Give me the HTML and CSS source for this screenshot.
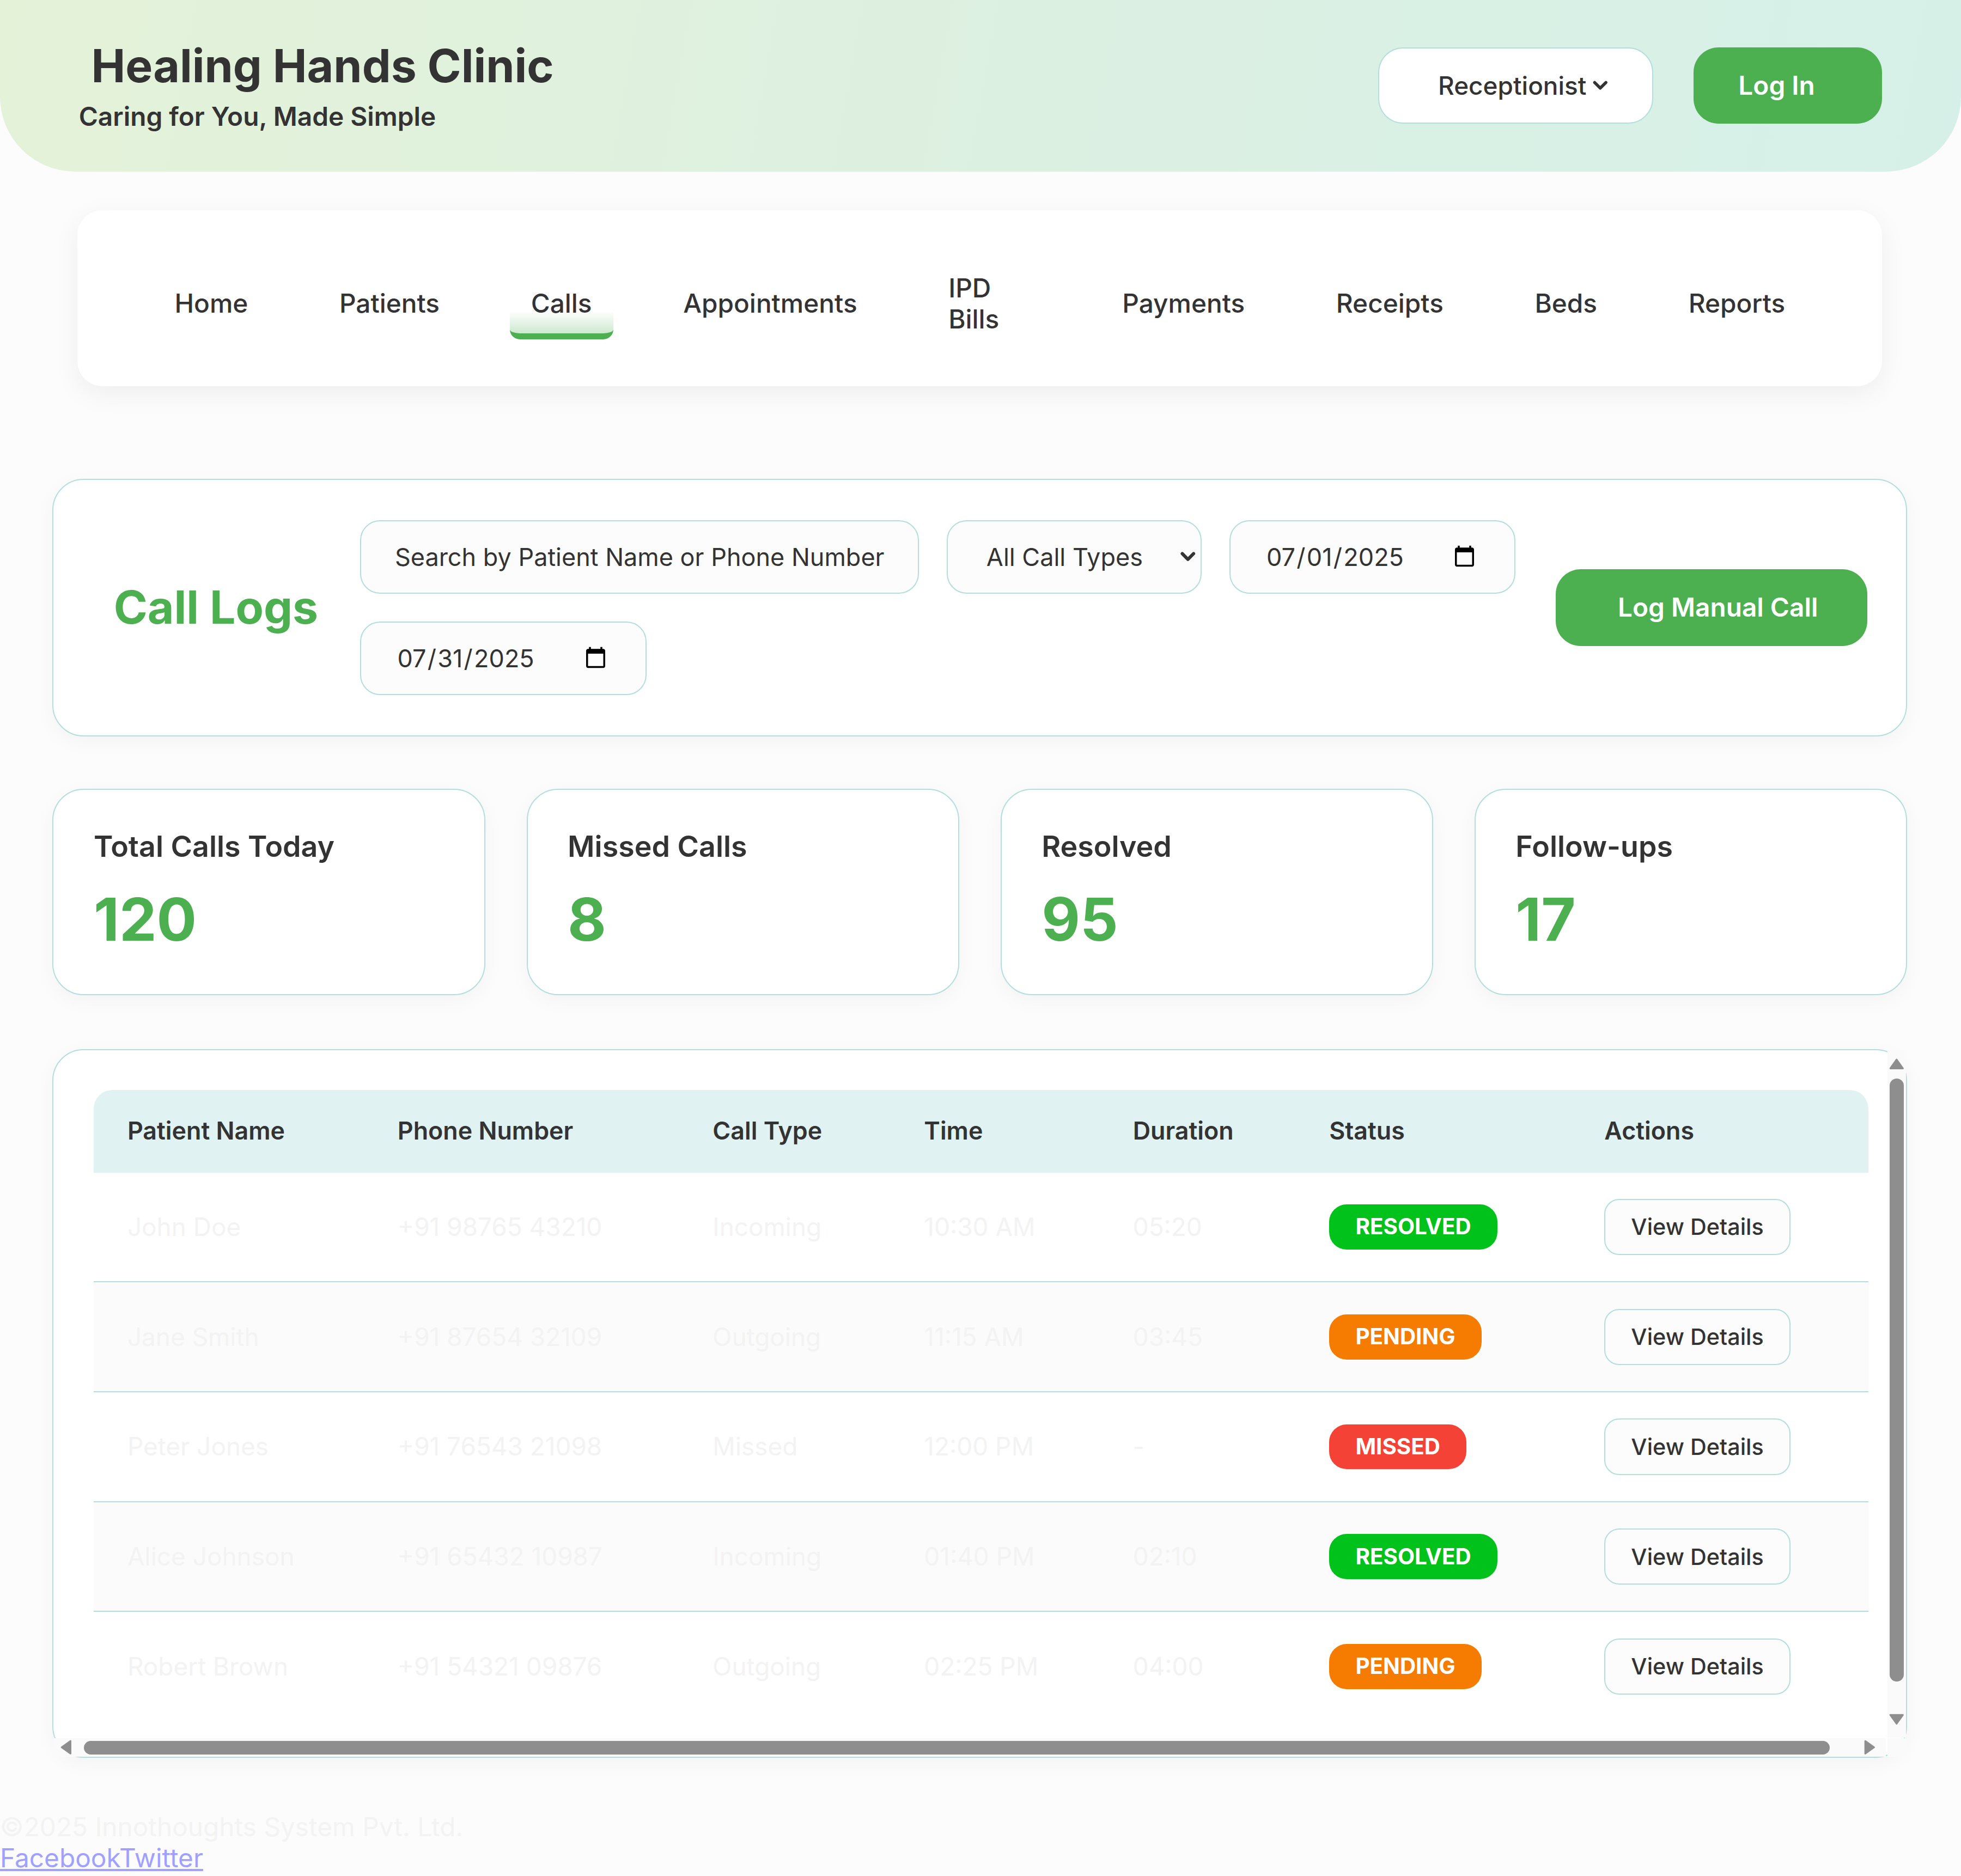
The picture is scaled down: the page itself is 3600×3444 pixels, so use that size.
FILE: index.html
```html
<!DOCTYPE html>
<html lang="en">
<head>
<meta charset="utf-8">
<title>Call Logs - Healing Hands Clinic</title>
<link rel="stylesheet" href="styles.css">
</head>
<body>
<header class="topbar">
  <div class="brand">
    <h1 class="brand-title">Healing Hands Clinic</h1>
    <p class="brand-tagline">Caring for You, Made Simple</p>
  </div>
  <div class="topbar-actions">
    <button class="role-btn" type="button">Receptionist <svg class="chev" viewBox="0 0 12 8" aria-hidden="true"><path d="M1.5 1.5 L6 6 L10.5 1.5"/></svg></button>
    <button class="login-btn" type="button">Log In</button>
  </div>
</header>

<nav class="mainnav">
  <a class="nav-link" href="#">Home</a>
  <a class="nav-link" href="#">Patients</a>
  <a class="nav-link is-active" href="#">Calls</a>
  <a class="nav-link" href="#">Appointments</a>
  <a class="nav-link is-wrapped" href="#">IPD Bills</a>
  <a class="nav-link" href="#">Payments</a>
  <a class="nav-link" href="#">Receipts</a>
  <a class="nav-link" href="#">Beds</a>
  <a class="nav-link" href="#">Reports</a>
</nav>

<main class="content">
  <section class="card toolbar">
    <h2 class="page-title">Call Logs</h2>
    <div class="filters">
      <input class="field field-search" type="text" placeholder="Search by Patient Name or Phone Number">
      <span class="select-wrap">
        <select class="field field-select">
          <option>All Call Types</option>
          <option>Incoming</option>
          <option>Outgoing</option>
          <option>Missed</option>
        </select>
        <svg class="select-chev" viewBox="0 0 12 8" aria-hidden="true"><path d="M1.5 1.5 L6 6 L10.5 1.5"/></svg>
      </span>
      <input class="field field-date" type="date" value="2025-07-01">
      <input class="field field-date" type="date" value="2025-07-31">
    </div>
    <button class="primary-btn" type="button">Log Manual Call</button>
  </section>

  <section class="stats">
    <div class="card stat">
      <h3 class="stat-label">Total Calls Today</h3>
      <p class="stat-value">120</p>
    </div>
    <div class="card stat">
      <h3 class="stat-label">Missed Calls</h3>
      <p class="stat-value">8</p>
    </div>
    <div class="card stat">
      <h3 class="stat-label">Resolved</h3>
      <p class="stat-value">95</p>
    </div>
    <div class="card stat">
      <h3 class="stat-label">Follow-ups</h3>
      <p class="stat-value">17</p>
    </div>
  </section>

  <section class="card table-card">
    <div class="table-scroll">
      <table class="calls">
        <colgroup>
          <col class="c-name"><col class="c-phone"><col class="c-type"><col class="c-time"><col class="c-dur"><col class="c-status"><col class="c-actions">
        </colgroup>
        <thead>
          <tr>
            <th>Patient Name</th><th>Phone Number</th><th>Call Type</th><th>Time</th><th>Duration</th><th>Status</th><th>Actions</th>
          </tr>
        </thead>
        <tbody>
          <tr>
            <td>John Doe</td><td>+91 98765 43210</td><td>Incoming</td><td>10:30 AM</td><td>05:20</td>
            <td><span class="badge badge-resolved">RESOLVED</span></td>
            <td><button class="ghost-btn" type="button">View Details</button></td>
          </tr>
          <tr>
            <td>Jane Smith</td><td>+91 87654 32109</td><td>Outgoing</td><td>11:15 AM</td><td>03:45</td>
            <td><span class="badge badge-pending">PENDING</span></td>
            <td><button class="ghost-btn" type="button">View Details</button></td>
          </tr>
          <tr>
            <td>Peter Jones</td><td>+91 76543 21098</td><td>Missed</td><td>12:00 PM</td><td>-</td>
            <td><span class="badge badge-missed">MISSED</span></td>
            <td><button class="ghost-btn" type="button">View Details</button></td>
          </tr>
          <tr>
            <td>Alice Johnson</td><td>+91 65432 10987</td><td>Incoming</td><td>01:40 PM</td><td>02:10</td>
            <td><span class="badge badge-resolved">RESOLVED</span></td>
            <td><button class="ghost-btn" type="button">View Details</button></td>
          </tr>
          <tr>
            <td>Robert Brown</td><td>+91 54321 09876</td><td>Outgoing</td><td>02:25 PM</td><td>04:00</td>
            <td><span class="badge badge-pending">PENDING</span></td>
            <td><button class="ghost-btn" type="button">View Details</button></td>
          </tr>
        </tbody>
      </table>
    </div>
    <div class="scrollbar scrollbar-v" aria-hidden="true">
      <svg class="sb-arrow sb-up" viewBox="0 0 12 9"><path d="M6 1 L11 8 L1 8 Z"/></svg>
      <span class="sb-thumb"></span>
      <svg class="sb-arrow sb-down" viewBox="0 0 12 9"><path d="M1 1 L11 1 L6 8 Z"/></svg>
    </div>
    <div class="scrollbar scrollbar-h" aria-hidden="true">
      <svg class="sb-arrow sb-left" viewBox="0 0 9 12"><path d="M1 6 L8 1 L8 11 Z"/></svg>
      <span class="sb-thumb"></span>
      <svg class="sb-arrow sb-right" viewBox="0 0 9 12"><path d="M1 1 L8 6 L1 11 Z"/></svg>
    </div>
    <div class="scrollbar-corner" aria-hidden="true"></div>
  </section>
</main>

<footer class="footer">
  <p class="footer-copy">©2025 Innothoughts System Pvt. Ltd.</p>
  <div class="footer-links"><a href="#">Facebook</a><a href="#">Twitter</a></div>
</footer>
</body>
</html>
```

FILE: styles.css
```css
html {
  zoom: 2.2959;
}

* {
  box-sizing: border-box;
}

body {
  margin: 0;
  background: #fcfcfc;
  font-family: Inter, "Noto Sans", "Liberation Sans", sans-serif;
  color: #333;
}

button,
input,
select {
  font-family: inherit;
}

/* ---------- Header ---------- */
.topbar {
  height: 137px;
  padding: 0 63px;
  display: flex;
  align-items: center;
  justify-content: space-between;
  background: linear-gradient(100deg, #e4f2d8 0%, #dcf0e2 55%, #d6f0e9 100%);
  border-radius: 0 0 60px 60px;
}

.brand-title {
  margin: 0;
  padding-left: 10px;
  font-size: 36.6px;
  font-weight: 700;
  line-height: 1.2;
  color: #333;
}

.brand-tagline {
  margin: 6px 0 0;
  font-size: 20.8px;
  font-weight: 600;
  line-height: 1.2;
  color: #333;
}

.topbar-actions {
  display: flex;
  gap: 32px;
}

.role-btn {
  height: 61px;
  width: 220px;
  padding: 0 0 0 47px;
  display: flex;
  align-items: center;
  gap: 5px;
  background: #fff;
  border: 1px solid #b2dfdb;
  border-radius: 20px;
  font-size: 20px;
  font-weight: 500;
  color: #333;
}

.chev {
  width: 12px;
  height: 8px;
  fill: none;
  stroke: #333;
  stroke-width: 2.4;
  stroke-linecap: round;
  stroke-linejoin: round;
}

.login-btn {
  height: 61px;
  width: 151px;
  padding: 0 0 0 36px;
  text-align: left;
  background: #4caf50;
  color: #fff;
  border: 0;
  border-radius: 20px;
  font-size: 20.8px;
  font-weight: 600;
}

/* ---------- Navigation ---------- */
.mainnav {
  margin: 31px 63px 0 62px;
  height: 141px;
  padding-top: 9px;
  background: #fff;
  border-radius: 20px;
  box-shadow: 0 6px 22px rgba(0, 0, 0, 0.06);
  display: flex;
  align-items: center;
  justify-content: center;
  gap: 39px;
}

.nav-link {
  position: relative;
  flex: none;
  padding: 8px 17px;
  font-size: 20.8px;
  font-weight: 500;
  line-height: 25px;
  color: #333;
  text-decoration: none;
}

.nav-link.is-wrapped {
  width: 100px;
}

.nav-link.is-active::after {
  content: "";
  position: absolute;
  left: 0;
  right: 0;
  bottom: -8px;
  height: 18px;
  border-bottom: 5px solid #4caf50;
  border-radius: 0 0 8px 8px;
  background: linear-gradient(to bottom, rgba(76, 175, 80, 0), rgba(76, 175, 80, 0.28));
}

/* ---------- Content ---------- */
.content {
  margin: 74px 43px 0 42px;
}

.card {
  background: #fff;
  border: 1px solid #b2dfdb;
  border-radius: 25px;
  box-shadow: 0 4px 16px rgba(0, 0, 0, 0.04);
}

.toolbar {
  display: flex;
  align-items: center;
  padding: 32px 31px 32px 48px;
}

.page-title {
  flex: 0 0 197px;
  margin: 0;
  font-size: 36.6px;
  font-weight: 700;
  line-height: 1.2;
  color: #4caf50;
  white-space: nowrap;
}

.filters {
  flex: none;
  width: 930px;
  display: flex;
  flex-wrap: wrap;
  gap: 22px;
}

.field {
  height: 59px;
  border: 1px solid #b2dfdb;
  border-radius: 16px;
  background: #fcfcfc;
  font-size: 19.6px;
  color: #333;
  padding: 0 27px;
  outline: none;
}

.field-search {
  width: 447px;
}

.field-search::placeholder {
  color: #333;
  opacity: 1;
}

.select-wrap {
  position: relative;
  display: block;
}

.field-select {
  -webkit-appearance: none;
  appearance: none;
  width: 204px;
  padding: 0 30px 0 31px;
}

.select-chev {
  position: absolute;
  right: 5px;
  top: 25.5px;
  width: 12px;
  height: 8px;
  fill: none;
  stroke: #333;
  stroke-width: 2.6;
  stroke-linecap: round;
  stroke-linejoin: round;
  pointer-events: none;
}

.field-date {
  width: 229px;
  padding: 0 28px;
}

.primary-btn {
  margin-left: auto;
  width: 249px;
  height: 61px;
  padding: 0 0 0 10px;
  border: 0;
  border-radius: 20px;
  background: #4caf50;
  color: #fff;
  font-size: 20.8px;
  font-weight: 600;
}

/* ---------- Stats ---------- */
.stats {
  margin-top: 42px;
  display: grid;
  grid-template-columns: repeat(4, 1fr);
  gap: 33px;
}

.stat {
  height: 165px;
  padding: 31.5px 32px 0;
}

.stat-label {
  margin: 0 0 15.5px;
  font-size: 23.4px;
  font-weight: 600;
  line-height: 1.2;
  color: #333;
}

.stat-value {
  margin: 0;
  font-size: 47.5px;
  font-weight: 700;
  line-height: 1.2;
  color: #4caf50;
}

/* ---------- Table ---------- */
.table-card {
  position: relative;
  margin-top: 43px;
  height: 567px;
}

.table-scroll {
  height: 100%;
  padding: 32px;
  overflow: auto;
  scrollbar-width: none;
}

.table-scroll::-webkit-scrollbar {
  display: none;
}

.scrollbar {
  position: absolute;
  display: flex;
  background: #fafafa;
}

.scrollbar-v {
  top: 0;
  right: 0;
  width: 15px;
  height: 550px;
  flex-direction: column;
  align-items: center;
  padding-top: 6.5px;
}

.scrollbar-h {
  left: 0;
  bottom: 0;
  width: 1465px;
  height: 15px;
  align-items: center;
  padding-left: 5.5px;
}

.scrollbar-corner {
  position: absolute;
  right: 0;
  bottom: 0;
  width: 15px;
  height: 15px;
  background: #fafafa;
}

.sb-arrow {
  flex: none;
  fill: #8e8e8e;
  stroke: #8e8e8e;
  stroke-width: 1.4;
  stroke-linejoin: round;
}

.scrollbar-v .sb-arrow {
  width: 12px;
  height: 9px;
}

.scrollbar-h .sb-arrow {
  width: 9px;
  height: 12px;
}

.sb-thumb {
  flex: none;
  display: block;
  background: #8e8e8e;
  border-radius: 6px;
}

.scrollbar-v .sb-thumb {
  width: 11px;
  height: 482px;
  margin: 7.5px 0 25.5px;
}

.scrollbar-h .sb-thumb {
  width: 1396px;
  height: 11px;
  margin: 0 27.5px 0 9.5px;
}

.calls {
  width: 1419px;
  border-collapse: separate;
  border-spacing: 0;
  table-layout: fixed;
}

.c-name { width: 216px; }
.c-phone { width: 252px; }
.c-type { width: 169px; }
.c-time { width: 167px; }
.c-dur { width: 157px; }
.c-status { width: 220px; }
.c-actions { width: 238px; }

.calls th {
  background: #e0f2f1;
  padding: 21px 27px;
  text-align: left;
  font-size: 19.5px;
  font-weight: 600;
  line-height: 24px;
  color: #333;
  white-space: nowrap;
}

.calls th:first-child {
  border-top-left-radius: 15px;
}

.calls th:last-child {
  border-top-right-radius: 15px;
}

.calls td {
  padding: 21px 27px;
  font-size: 20px;
  line-height: 24px;
  color: #f3f3f3;
  border-bottom: 1px solid #b2dfdb;
  vertical-align: middle;
  white-space: nowrap;
}

.calls tbody tr:nth-child(even) td {
  background: #fbfbfb;
}

.calls tbody tr:last-child td {
  border-bottom: 0;
}

.badge {
  display: inline-block;
  padding: 7.5px 21px;
  border-radius: 14px;
  font-size: 17.6px;
  font-weight: 700;
  line-height: 21px;
  color: #fff;
}

.badge-resolved { background: #00c21a; }
.badge-pending { background: #f57c00; }
.badge-missed { background: #f44336; }

.ghost-btn {
  height: 45px;
  padding: 0 20.5px;
  border: 1px solid #b2dfdb;
  border-radius: 12px;
  background: #fcfcfc;
  font-size: 18px;
  font-weight: 500;
  color: #333;
}

/* ---------- Footer ---------- */
.footer {
  margin-top: 43px;
  font-size: 20.8px;
  line-height: 1.2;
}

.footer-copy {
  margin: 0;
  color: #f3f3f3;
}

.footer-links a {
  color: #a0a0ff;
}
```
